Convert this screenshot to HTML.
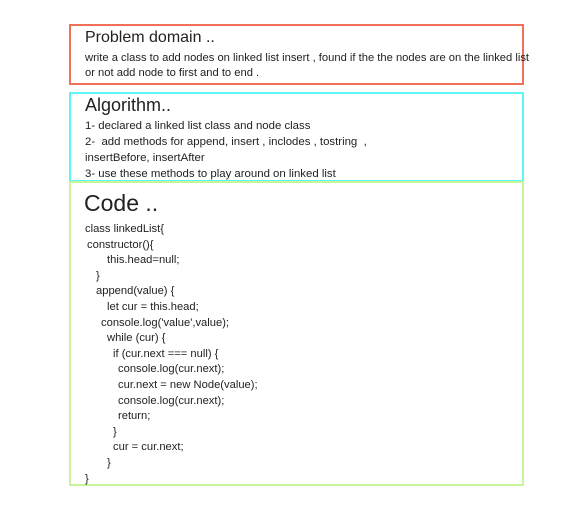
<html><head><style>
body{margin:0;width:563px;height:512px;background:#fff;font-family:"Liberation Sans",sans-serif;color:#222;position:relative;overflow:hidden}
.b{position:absolute;box-sizing:border-box}
.t{position:absolute;white-space:pre;line-height:1}
.c div{white-space:pre}
</style></head><body>
<div class="b" style="left:69px;top:24px;width:455px;height:61px;border:2px solid #f0705a"></div>
<div class="b" style="left:69px;top:92px;width:455px;height:90px;border:2px solid #5ff5f5"></div>
<div class="b" style="left:69px;top:181px;width:455px;height:305px;border:2px solid #c8f59a"></div>
<div class="t" style="left:85px;top:30px;font-size:16px">Problem domain ..</div>
<div class="t" style="left:85px;top:53px;font-size:11.2px">write a class to add nodes on linked list insert , found if the the nodes are on the linked list</div>
<div class="t" style="left:85px;top:68px;font-size:11.2px">or not add node to first and to end .</div>
<div class="t" style="left:85px;top:96px;font-size:18px">Algorithm..</div>
<div class="t" style="left:85px;top:121px;font-size:11.4px">1- declared a linked list class and node class</div>
<div class="t" style="left:85px;top:137px;font-size:11.4px">2-  add methods for append, insert , inclodes , tostring  ,</div>
<div class="t" style="left:85px;top:153px;font-size:11.4px">insertBefore, insertAfter</div>
<div class="t" style="left:85px;top:169px;font-size:11.4px">3- use these methods to play around on linked list</div>
<div class="t" style="left:84px;top:192px;font-size:23px">Code ..</div>
<div class="c" style="position:absolute;left:0;top:222px;font-size:11.2px;line-height:15.6px"><div style="padding-left:85px">class linkedList{</div><div style="padding-left:87px">constructor(){</div><div style="padding-left:107px">this.head=null;</div><div style="padding-left:96px">}</div><div style="padding-left:96px">append(value) {</div><div style="padding-left:107px">let cur = this.head;</div><div style="padding-left:101px">console.log('value',value);</div><div style="padding-left:107px">while (cur) {</div><div style="padding-left:113px">if (cur.next === null) {</div><div style="padding-left:118px">console.log(cur.next);</div><div style="padding-left:118px">cur.next = new Node(value);</div><div style="padding-left:118px">console.log(cur.next);</div><div style="padding-left:118px">return;</div><div style="padding-left:113px">}</div><div style="padding-left:113px">cur = cur.next;</div><div style="padding-left:107px">}</div><div style="padding-left:85px">}</div></div>
</body></html>
